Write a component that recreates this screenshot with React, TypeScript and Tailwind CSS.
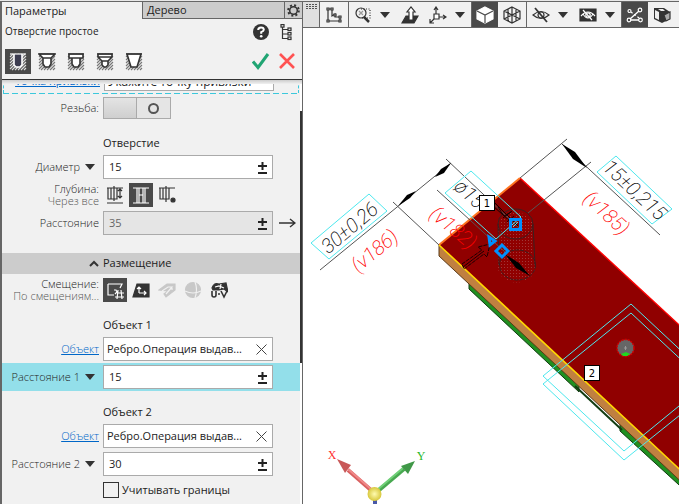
import type { ReactNode } from 'react'
import clsx from 'clsx'

export default function App() {
  return (
    <div className="flex h-screen flex-col overflow-hidden bg-white font-['Open_Sans','Noto_Sans',sans-serif] text-[11px] text-[#222]">
      <div className="h-0.5 shrink-0 border-b border-[#666] bg-[#e8e8e8]" />
      <div className="flex min-h-0 flex-1">
        <Sidebar />
        <main className="flex min-w-0 flex-1 flex-col">
          <Toolbar />
          <Viewport />
        </main>
      </div>
    </div>
  )
}

const Sidebar = () => {
  return (
    <aside className="flex w-[303px] shrink-0 flex-col border-r border-l-2 border-[#666] bg-[#f1f1f1]">
      <div className="flex h-[17px] shrink-0 leading-4">
        <button className="w-[140px] pl-[3px] text-left">Параметры</button>
        <button className="flex-1 border-b border-l border-[#666] bg-[#ccc] pl-1 text-left">
          Дерево
        </button>
        <button
          aria-label="Настройки"
          className="flex w-[18px] items-center justify-center border-b border-l border-[#666] bg-[#ccc]"
        >
          <GearIcon />
        </button>
      </div>

      <div className="shrink-0 border-b border-[#333] pr-[6px] pb-[5px] pl-[3px]">
        <div className="flex h-6 items-center justify-between">
          <h1 className="text-[10px] leading-4">Отверстие простое</h1>
          <div className="flex gap-2 pt-1">
            <button aria-label="Справка">
              <HelpIcon />
            </button>
            <button aria-label="Структура">
              <TreeIcon />
            </button>
          </div>
        </div>
        <div className="flex items-center justify-between pt-[6px]">
          <div className="flex gap-[3px]">
            <HoleButton active label="Простое" path="M5 1V12L7 14H11L13 12V1" />
            <HoleButton label="С зенковкой" path="M1 1H17L13 5V11L11 14H7L5 11V5Z M5 5H13" />
            <HoleButton label="С цековкой" path="M2 1H16V5H13V11L11 14H7L5 11V5H2Z M5 5H13" />
            <HoleButton
              label="С зенковкой и цековкой"
              path="M2 1H16V4L12 8V12L10 14H8L6 12V8L2 4Z M2 4H16 M6 8H12"
            />
            <HoleButton label="Коническое" path="M2 1H16L12 14H6Z" />
          </div>
          <div className="flex gap-2">
            <button aria-label="Создать объект">
              <svg width="18" height="18" viewBox="0 0 18 18" fill="none">
                <path d="M1 8.5L6 14.5L16 1" stroke="#20a573" strokeWidth="3" />
              </svg>
            </button>
            <button aria-label="Завершить">
              <svg width="18" height="18" viewBox="0 0 18 18" fill="none">
                <path d="M2 1L16 15M16 1L2 15" stroke="#ff5252" strokeWidth="2.6" />
              </svg>
            </button>
          </div>
        </div>
      </div>
      <div className="h-1 shrink-0 bg-linear-to-b from-[#ccc] to-[#f1f1f1]" />

      <div className="flex min-h-0 flex-1">
        <form className="min-w-0 flex-1 overflow-hidden">
          <AnchorRow />
          <Row label="Резьба:">
            <button
              type="button"
              role="switch"
              aria-checked="false"
              aria-label="Резьба"
              className="flex h-[22px] w-[68px] border border-[#aaa] bg-[#e5e5e5]"
            >
              <span className="h-full w-1/2 border-r border-[#aaa] bg-linear-to-b from-[#e4e4e4] to-[#cfcfcf]" />
              <span className="flex h-full w-1/2 items-center justify-center">
                <span className="h-[11px] w-[11px] rounded-full border-2 border-[#555]" />
              </span>
            </button>
          </Row>

          <Heading>Отверстие</Heading>
          <Row label="Диаметр" id="diameter" caret>
            <NumberField id="diameter" value="15" />
          </Row>
          <Row label="Глубина:" hint="Через все">
            <div className="flex gap-0.5">
              <IconButton label="На расстояние">
                <path d="M1 3H17M1 18H17M2 3V14H11V3M5 3V14M8 1V16M14 4V13M12 6L14 4L16 6M12 11L14 13L16 11" />
              </IconButton>
              <IconButton label="Через все" active>
                <path d="M1 3H17M1 18H17M5 3V18M7 3V18M11 3V18M13 3V18M7 10H11" />
              </IconButton>
              <IconButton label="До объекта">
                <path d="M1 3H17M2 3V14H11V3M5 3V14M8 1V17" />
                <circle cx="15" cy="15" r="2" fill="currentColor" />
              </IconButton>
            </div>
          </Row>
          <Row
            label="Расстояние"
            id="depth"
            trailing={
              <button type="button" aria-label="Направление">
                <svg width="17" height="10" viewBox="0 0 17 10" fill="none" stroke="#333" strokeWidth="1.4">
                  <path d="M0 5H16M11 1L16 5L11 9" />
                </svg>
              </button>
            }
          >
            <NumberField id="depth" value="35" disabled />
          </Row>

          <button
            type="button"
            className="mt-4 mb-0.5 flex h-[21px] w-full items-center gap-1 bg-[#ccc] pl-[87px]"
          >
            <svg width="10" height="7" viewBox="0 0 10 7" fill="none" stroke="#333" strokeWidth="2">
              <path d="M1 6L5 2L9 6" />
            </svg>
            Размещение
          </button>
          <Row label="Смещение:" hint="По смещениям...">
            <div className="flex gap-0.5">
              <IconButton label="По смещениям" active>
                <path d="M2 4H16L14 8M2 4V15H8M8 10H10L11 12L9 14M12 13H18M9 17H18M12 10L11 19M15 10L16 19" />
              </IconButton>
              <IconButton label="По плоскости">
                <path d="M5 4H17V17H1Z" fill="currentColor" />
                <path d="M7 13V7M5 9L7 7L9 9M7 13H14M12 11L14 13L12 15" stroke="white" />
              </IconButton>
              <IconButton label="По поверхности" muted>
                <path d="M1 10L9 4H17V10L8 17L6 14L10 11Z" fill="currentColor" />
                <path d="M4 11L10 7H14L8 14M14 8V10" stroke="#f1f1f1" />
              </IconButton>
              <IconButton label="По сфере" muted>
                <circle cx="9" cy="10" r="7.500" fill="currentColor" />
                <path d="M1 11Q9 15 17 11M11 2Q14 9 11 18" stroke="#f1f1f1" />
              </IconButton>
              <IconButton label="По параметрам UV">
                <path d="M2 8Q4 2 9 4L16 3L18 12L14 9L9 10L3 10Z" fill="currentColor" />
                <path d="M5 7L9 6L14 8M11 4L10 9" stroke="white" />
                <path d="M2 11V15Q2 17 4 17T6 15V11M8 14H10M11 11L14 17L17 11" strokeWidth="1.6" />
              </IconButton>
            </div>
          </Row>

          <Heading>Объект 1</Heading>
          <Row label="Объект" link>
            <ObjectField label="Объект 1" />
          </Row>
          <Row label="Расстояние 1" id="distance-1" caret highlighted>
            <NumberField id="distance-1" value="15" />
          </Row>

          <Heading>Объект 2</Heading>
          <Row label="Объект" link>
            <ObjectField label="Объект 2" />
          </Row>
          <Row label="Расстояние 2" id="distance-2" caret>
            <NumberField id="distance-2" value="30" />
          </Row>
          <label className="ml-[101px] flex h-6 items-center gap-[3px]">
            <input type="checkbox" className="h-4 w-4 appearance-none border border-[#333] bg-[#f1f1f1]" />
            Учитывать границы
          </label>
        </form>
        <div className="flex w-0.5 flex-col bg-white pt-[27px]">
          <div className="h-[64%] bg-[#333]" />
        </div>
      </div>
    </aside>
  )
}

/* Scrolled almost out of view, only the bottom edge is left */
const AnchorRow = () => {
  return (
    <div className="flex h-[10px] flex-col justify-end overflow-hidden">
      <div className="mx-px grid shrink-0 grid-cols-[96px_170px] gap-x-1 border-x border-dashed border-[#3cc8dc] pb-0.5">
        <a
          href="#anchor"
          className="self-end pb-0.5 text-right text-[11px] leading-4 text-[#0067c8] underline"
        >
          Точка привязки
        </a>
        <input
          readOnly
          aria-label="Точка привязки"
          value="Укажите точку привязки"
          className="h-6 min-w-0 border border-[#aaa] bg-white px-[3px] pt-1 text-xs"
        />
      </div>
      <div className="mx-px h-px shrink-0 bg-[repeating-linear-gradient(90deg,#3cc8dc_0_6px,transparent_6px_9px)]" />
    </div>
  )
}

const Heading = ({ children }: { children: ReactNode }) => {
  return <h2 className="mt-[11px] ml-[101px] h-5 text-[11px] leading-5 font-medium">{children}</h2>
}

type RowProps = {
  label: string
  id?: string
  hint?: string
  caret?: boolean
  link?: boolean
  highlighted?: boolean
  trailing?: ReactNode
  children: ReactNode
}

const Row = ({ label, id, hint, caret, link, highlighted, trailing, children }: RowProps) => {
  return (
    <div
      className={clsx(
        'grid h-7 grid-cols-[97px_170px_1fr] items-center gap-x-1',
        highlighted && 'bg-[#93dfea]'
      )}
    >
      <div className="flex items-center justify-end gap-[5px] text-right leading-3 font-light whitespace-nowrap">
        {link ? (
          <a href="#object" className="text-[#0067c8] underline">
            {label}
          </a>
        ) : hint ? (
          <div>
            <div>{label}</div>
            <div className="text-[#555]">{hint}</div>
          </div>
        ) : (
          <label htmlFor={id}>{label}</label>
        )}
        {caret && (
          <button type="button" aria-label="Варианты" className="pr-1">
            <Caret />
          </button>
        )}
      </div>
      {children}
      {trailing && <div className="flex pl-0.5">{trailing}</div>}
    </div>
  )
}

const NumberField = ({ id, value, disabled }: { id: string; value: string; disabled?: boolean }) => {
  return (
    <div className={clsx('flex h-6 border border-[#aaa]', disabled ? 'bg-[#e5e5e5] text-[#666]' : 'bg-white')}>
      <input id={id} defaultValue={value} disabled={disabled} className="min-w-0 flex-1 pl-[5px]" />
      <button type="button" aria-label="Допуск" className="px-[5px] text-[#222]">
        <svg width="9" height="13" viewBox="0 0 9 13" stroke="currentColor" strokeWidth="2">
          <path d="M0 5H9M4.5 1V9M0 12H9" />
        </svg>
      </button>
    </div>
  )
}

const ObjectField = ({ label }: { label: string }) => {
  return (
    <div className="flex h-6 border border-[#aaa] bg-white">
      <input
        readOnly
        aria-label={label}
        value="Ребро.Операция выдав..."
        className="min-w-0 flex-1 pl-[3px]"
      />
      <button type="button" aria-label="Очистить" className="px-[5px]">
        <svg width="11" height="11" viewBox="0 0 11 11" stroke="#444">
          <path d="M0.5 0.5L10.5 10.5M10.5 0.5L0.5 10.5" />
        </svg>
      </button>
    </div>
  )
}

type IconButtonProps = { label: string; active?: boolean; muted?: boolean; children: ReactNode }

const IconButton = ({ label, active, muted, children }: IconButtonProps) => {
  return (
    <button
      type="button"
      aria-label={label}
      className={clsx(
        'flex h-6 w-6 items-center justify-center',
        active ? 'bg-[#4a4a4a] text-white' : muted ? 'text-[#c8c8c8]' : 'text-[#333]'
      )}
    >
      <svg width="18" height="20" viewBox="0 0 18 20" fill="none" stroke="currentColor" strokeWidth="1.2">
        {children}
      </svg>
    </button>
  )
}

const HoleButton = ({ label, path, active }: { label: string; path: string; active?: boolean }) => {
  return (
    <button
      aria-label={label}
      className={clsx('flex h-[25px] w-[26px] items-center justify-center', active && 'bg-[#4a4a4a]')}
    >
      <svg width="18" height="18" viewBox="0 0 18 18" fill="none">
        <path
          d="M1 4L4 1M1 7L7 1M1 10L10 1M1 13L13 1M1 16L16 1M3 17L17 3M6 17L17 6M9 17L17 9M12 17L17 12M15 17L17 15"
          stroke={active ? '#ddd' : '#777'}
          strokeWidth="1.1"
        />
        <path
          d={path}
          fill={active ? '#3c3c50' : '#fff'}
          stroke={active ? '#fff' : '#333'}
          strokeWidth="1.6"
        />
        <path d="M1 1H17" stroke={active ? '#fff' : '#333'} strokeWidth="1.2" />
      </svg>
    </button>
  )
}

const Caret = () => {
  return (
    <svg width="10" height="6" viewBox="0 0 10 6" fill="#333">
      <path d="M0 0H10L5 6Z" />
    </svg>
  )
}

const GearIcon = () => {
  return (
    <svg width="13" height="13" viewBox="0 0 13 13" fill="none" stroke="#333">
      <circle cx="6.5" cy="6.5" r="3.8" strokeWidth="1.5" />
      <circle cx="6.5" cy="6.5" r="5.3" strokeWidth="2" strokeDasharray="2 2.16" />
    </svg>
  )
}

const HelpIcon = () => {
  return (
    <svg width="18" height="18" viewBox="0 0 18 18" fill="none">
      <circle cx="9" cy="8" r="8" fill="#333" />
      <path d="M6.2 6Q6.2 3.4 9 3.4T11.8 5.8Q11.8 7 9.2 8.2V9.8" stroke="white" strokeWidth="2" />
      <circle cx="9.2" cy="12.2" r="1.3" fill="white" />
    </svg>
  )
}

const TreeIcon = () => {
  return (
    <svg width="18" height="18" viewBox="0 0 18 18" fill="none" stroke="#333" strokeWidth="1.2">
      <path d="M4.5 3V14.5H10M4.5 5.500H10M4.5 10H10" />
      <rect x="3" y="0.6" width="3" height="2.5" />
      <rect x="10" y="4" width="3" height="2.5" />
      <rect x="10" y="8.5" width="3" height="2.5" />
      <rect x="10" y="13" width="3" height="2.5" />
    </svg>
  )
}

type ToolProps = { label: string; active?: boolean; caret?: boolean; children: ReactNode }

const Tool = ({ label, active, caret, children }: ToolProps) => {
  return (
    <button
      aria-label={label}
      className={clsx(
        'flex h-full shrink-0 items-center',
        active ? 'bg-[#4a4a4a] px-1 text-white' : 'px-[5px] text-[#333]'
      )}
    >
      <svg width="18" height="18" viewBox="0 0 18 18" fill="none" stroke="currentColor" strokeWidth="1.2">
        {children}
      </svg>
      {caret && (
        <span className="pr-px pl-2">
          <Caret />
        </span>
      )}
    </button>
  )
}

const ToolGroup = ({ children }: { children: ReactNode }) => {
  return <div className="flex h-full shrink-0 border-l border-[#666]">{children}</div>
}

const Toolbar = () => {
  return (
    <nav className="flex h-[26px] shrink-0 overflow-hidden border-b border-[#666] bg-[#f1f1f1]">
      <div className="w-4 shrink-0 bg-[#e0e0e0] pt-0.5 pl-[3px]">
        <svg width="11" height="5" viewBox="0 0 11 5" stroke="#555" strokeDasharray="2 1">
          <path d="M0 0.5H11M0 2.5H11M0 4.5H11" />
        </svg>
      </div>
      <ToolGroup>
        <Tool label="Эскиз">
          <path d="M3 3H7V10L10 8V11H15V15H3Z" />
          <path
            d="M2 2H4V4H2ZM6 2H8V4H6ZM14 10H16V12H14ZM2 14H4V16H2ZM14 14H16V16H14ZM9 8H11V10H9Z"
            fill="white"
          />
        </Tool>
      </ToolGroup>
      <ToolGroup>
        <Tool label="Масштаб" caret>
          <circle cx="7" cy="7" r="5" />
          <path d="M10 11L15 16" strokeWidth="2.5" />
          <path d="M7 3H16V12H8" strokeDasharray="1 1.5" />
          <path d="M5 5L9 9M5 9L9 5" stroke="#999" />
        </Tool>
        <Tool label="Ориентация">
          <path d="M5 10H17L13 17H1Z" fill="currentColor" />
          <path d="M8 14V6H6L10 1L14 6H12V14Z" fill="white" />
        </Tool>
        <Tool label="Оси" caret>
          <path d="M7 2V8M5 4L7 1L9 4M10 11H17M14 9L17 11L14 13M5 13L1 17M1 13V17H5" />
          <path d="M5 8H10V13H5Z" fill="white" />
        </Tool>
      </ToolGroup>
      <ToolGroup>
        <Tool label="Полутоновое" active>
          <path d="M9 1L17 5V13L9 17L1 13V5Z" fill="currentColor" />
          <path d="M1 5L9 9L17 5M9 9V17" stroke="#4a4a4a" />
        </Tool>
        <Tool label="Каркас">
          <path d="M9 1L17 5V13L9 17L1 13V5ZM1 5L9 9L17 5M9 9V17M1 13L9 9L17 13M9 1V9M5 3V15M13 3V15" />
        </Tool>
      </ToolGroup>
      <ToolGroup>
        <Tool label="Скрыть" caret>
          <path d="M1 9Q9 2 17 9Q9 16 1 9Z" />
          <circle cx="9" cy="9" r="3" />
          <path d="M3 2L15 16" strokeWidth="1.8" />
        </Tool>
        <Tool label="Скрыть все" caret>
          <path d="M1 3H17V15H1Z" fill="currentColor" />
          <path d="M2 10Q9 2 16 10M4 8Q9 16 14 8" stroke="white" />
          <circle cx="9" cy="9" r="2.2" stroke="white" />
          <path d="M4 4L13 14" stroke="white" />
        </Tool>
      </ToolGroup>
      <ToolGroup>
        <Tool label="Привязки" active>
          <path d="M4 13L13 5M5 14H13" strokeWidth="1.4" />
          <path d="M5 6L13 12" strokeDasharray="2 2" />
          <circle cx="3.500" cy="5" r="1.5" />
          <circle cx="14" cy="4" r="1.8" />
          <circle cx="3" cy="14" r="1.8" />
          <circle cx="14.500" cy="14" r="1.8" />
        </Tool>
        <Tool label="Сечение">
          <path d="M1 2H11L17 6V13L9 17L1 13Z" fill="currentColor" stroke="none" />
          <path d="M2 4L6 6V14L2 12ZM5 3H10L12 5H8Z" fill="#eee" stroke="none" />
          <path d="M11 9L17 6V13L13 15Z" fill="#aaa" stroke="#333" />
        </Tool>
      </ToolGroup>
    </nav>
  )
}

const Viewport = () => {
  return (
    <div className="min-h-0 flex-1 overflow-hidden">
      <svg
        className="h-full w-full font-['Open_Sans','Noto_Sans',sans-serif]"
        viewBox="303 28 376 476"
        preserveAspectRatio="xMinYMin slice"
        fill="none"
      >
        <defs>
          <pattern id="dots" width="3" height="3" patternUnits="userSpaceOnUse">
            <path d="M0 0H1V1H0Z" fill="#a03838" />
          </pattern>
          <radialGradient id="ball">
            <stop offset="0" stopColor="#fffbb0" />
            <stop offset="1" stopColor="#d8c83c" />
          </radialGradient>
        </defs>

        {/* Plate */}
        <path d="M469 281L579 384V392L469 289ZM620 424L690 488V495L620 431Z" fill="#209020" stroke="#123c12" />
        <path d="M575 386L622 430" stroke="#123c12" strokeWidth="2" />
        <path d="M439 245L690 479V490L439 256Z" fill="#c08040" />
        <path d="M439 245V256L690 490" stroke="#5a3a1a" />
        <path d="M439 245L520 178L690 335V479Z" fill="#900000" />
        <path d="M520 178L690 335" stroke="#ff0000" strokeWidth="1.4" />
        <path d="M439 245L520 178" stroke="#ff7420" strokeWidth="2" />
        <path d="M439 245L690 479" stroke="#ffd800" strokeWidth="1.6" />

        {/* Hole preview */}
        <path d="M498 224V267A18 15 0 0 0 535 267L533 224A18 15 0 0 0 498 224Z" fill="url(#dots)" />
        <g stroke="#3a2020">
          <ellipse cx="515.5" cy="224" rx="17.5" ry="15" />
          <ellipse cx="517.5" cy="265" rx="18" ry="15" strokeDasharray="4 1" />
          <path d="M498 224L499 265M533 224L535 265" />
        </g>
        <circle cx="625.5" cy="348" r="8.5" fill="#666" stroke="#d00000" strokeDasharray="2 1" strokeWidth="1.5" />
        <path d="M621 354L626 352L630 354L627 356H623Z" fill="#20d820" />
        <path d="M624 348H627M625.5 346V350" stroke="#999" />

        {/* Dimension lines */}
        <g stroke="#555">
          <path d="M320 270L451 163M393 202L439 245M446 159L520 229" />
          <path d="M437 190L505 252M520 178L567 139M528 213L591 162M562 144L660 235" />
        </g>
        <g fill="#000">
          <path d="M398 206L407 195L416 191L410 198Z" />
          <path d="M451 163L444 173L435 177L441 169Z" />
          <path d="M562 144L575 152L587 168L573 159Z" />
          <path d="M505 254L519 263L530 276L516 268Z" />
        </g>
        <g stroke="#1a0000">
          <path d="M462 264L482 250L478 247L490 244L487 257L484 254L464 269Z" strokeDasharray="4 1" />
          <path d="M463 267L484 251" />
          <path d="M483 197L512 223M489 197L518 226M498 207L504 216L511 212M503 218L512 211M507 222L514 216" />
        </g>

        <g stroke="#4de8ee">
          <path d="M311 243L369 194L387 211L329 259Z" />
          <path d="M471 171L445 193L496 239L521 217Z" />
          <path d="M616 156L597 172L652 224L672 209Z" />
          <path d="M690 359L631 304L543 376L624 451L690 397" />
          <path d="M690 368L631 313L543 384L624 460L690 407" />
        </g>

        <g className="text-[20px] font-extralight italic font-['Roboto',sans-serif]" textAnchor="middle" fill="#000">
          <text transform="translate(354 233) rotate(-40)">30±0,26</text>
          <text transform="translate(465 199) rotate(42)">ø15</text>
          <text transform="translate(630 195) rotate(43)">15±0,215</text>
          <g fill="#ff0000">
            <text transform="translate(379 256) rotate(-40)">(v186)</text>
            <text transform="translate(449 233) rotate(40)">(v182)</text>
            <text transform="translate(602 218) rotate(43)">(v185)</text>
          </g>
        </g>

        {/* Handles */}
        <g stroke="#0090ff" strokeWidth="3">
          <path d="M510.500 219.500H520.500V229.500H510.500ZM502 245L508 251L502 257L496 251ZM489 237L495 241L490 245Z" />
        </g>
        <path d="M513 227L518 222" stroke="#4de8ee" />
        <g className="text-[10px] font-['DejaVu_Sans',sans-serif]" textAnchor="middle" stroke="#000">
          <rect x="479.500" y="195.500" width="15" height="15" fill="#fff" />
          <text x="487" y="207" fill="#000" stroke="none">
            1
          </text>
          <rect x="584.500" y="365.500" width="15" height="15" fill="#fff" />
          <text x="592" y="377" fill="#000" stroke="none">
            2
          </text>
        </g>

        {/* Axes */}
        <g strokeWidth="4">
          <path d="M375 494V510" stroke="#4858a8" />
          <path d="M372 491L348 470" stroke="#d86060" />
          <path d="M372 490L348 469" stroke="#f08888" strokeWidth="2" />
          <path d="M378 491L404 469" stroke="#48a850" />
          <path d="M377 490L403 468" stroke="#70d078" strokeWidth="2" />
        </g>
        <path d="M337 459L351 465L345 473Z" fill="#c85858" />
        <path d="M415 461L408 474L401 466Z" fill="#409848" />
        <circle cx="374.500" cy="494" r="7" fill="url(#ball)" />
        <g className="text-xs font-['Liberation_Serif',serif]" textAnchor="middle">
          <text x="332" y="459" fill="#ff3030">
            X
          </text>
          <text x="421" y="460" fill="#28b828">
            Y
          </text>
        </g>
      </svg>
    </div>
  )
}
